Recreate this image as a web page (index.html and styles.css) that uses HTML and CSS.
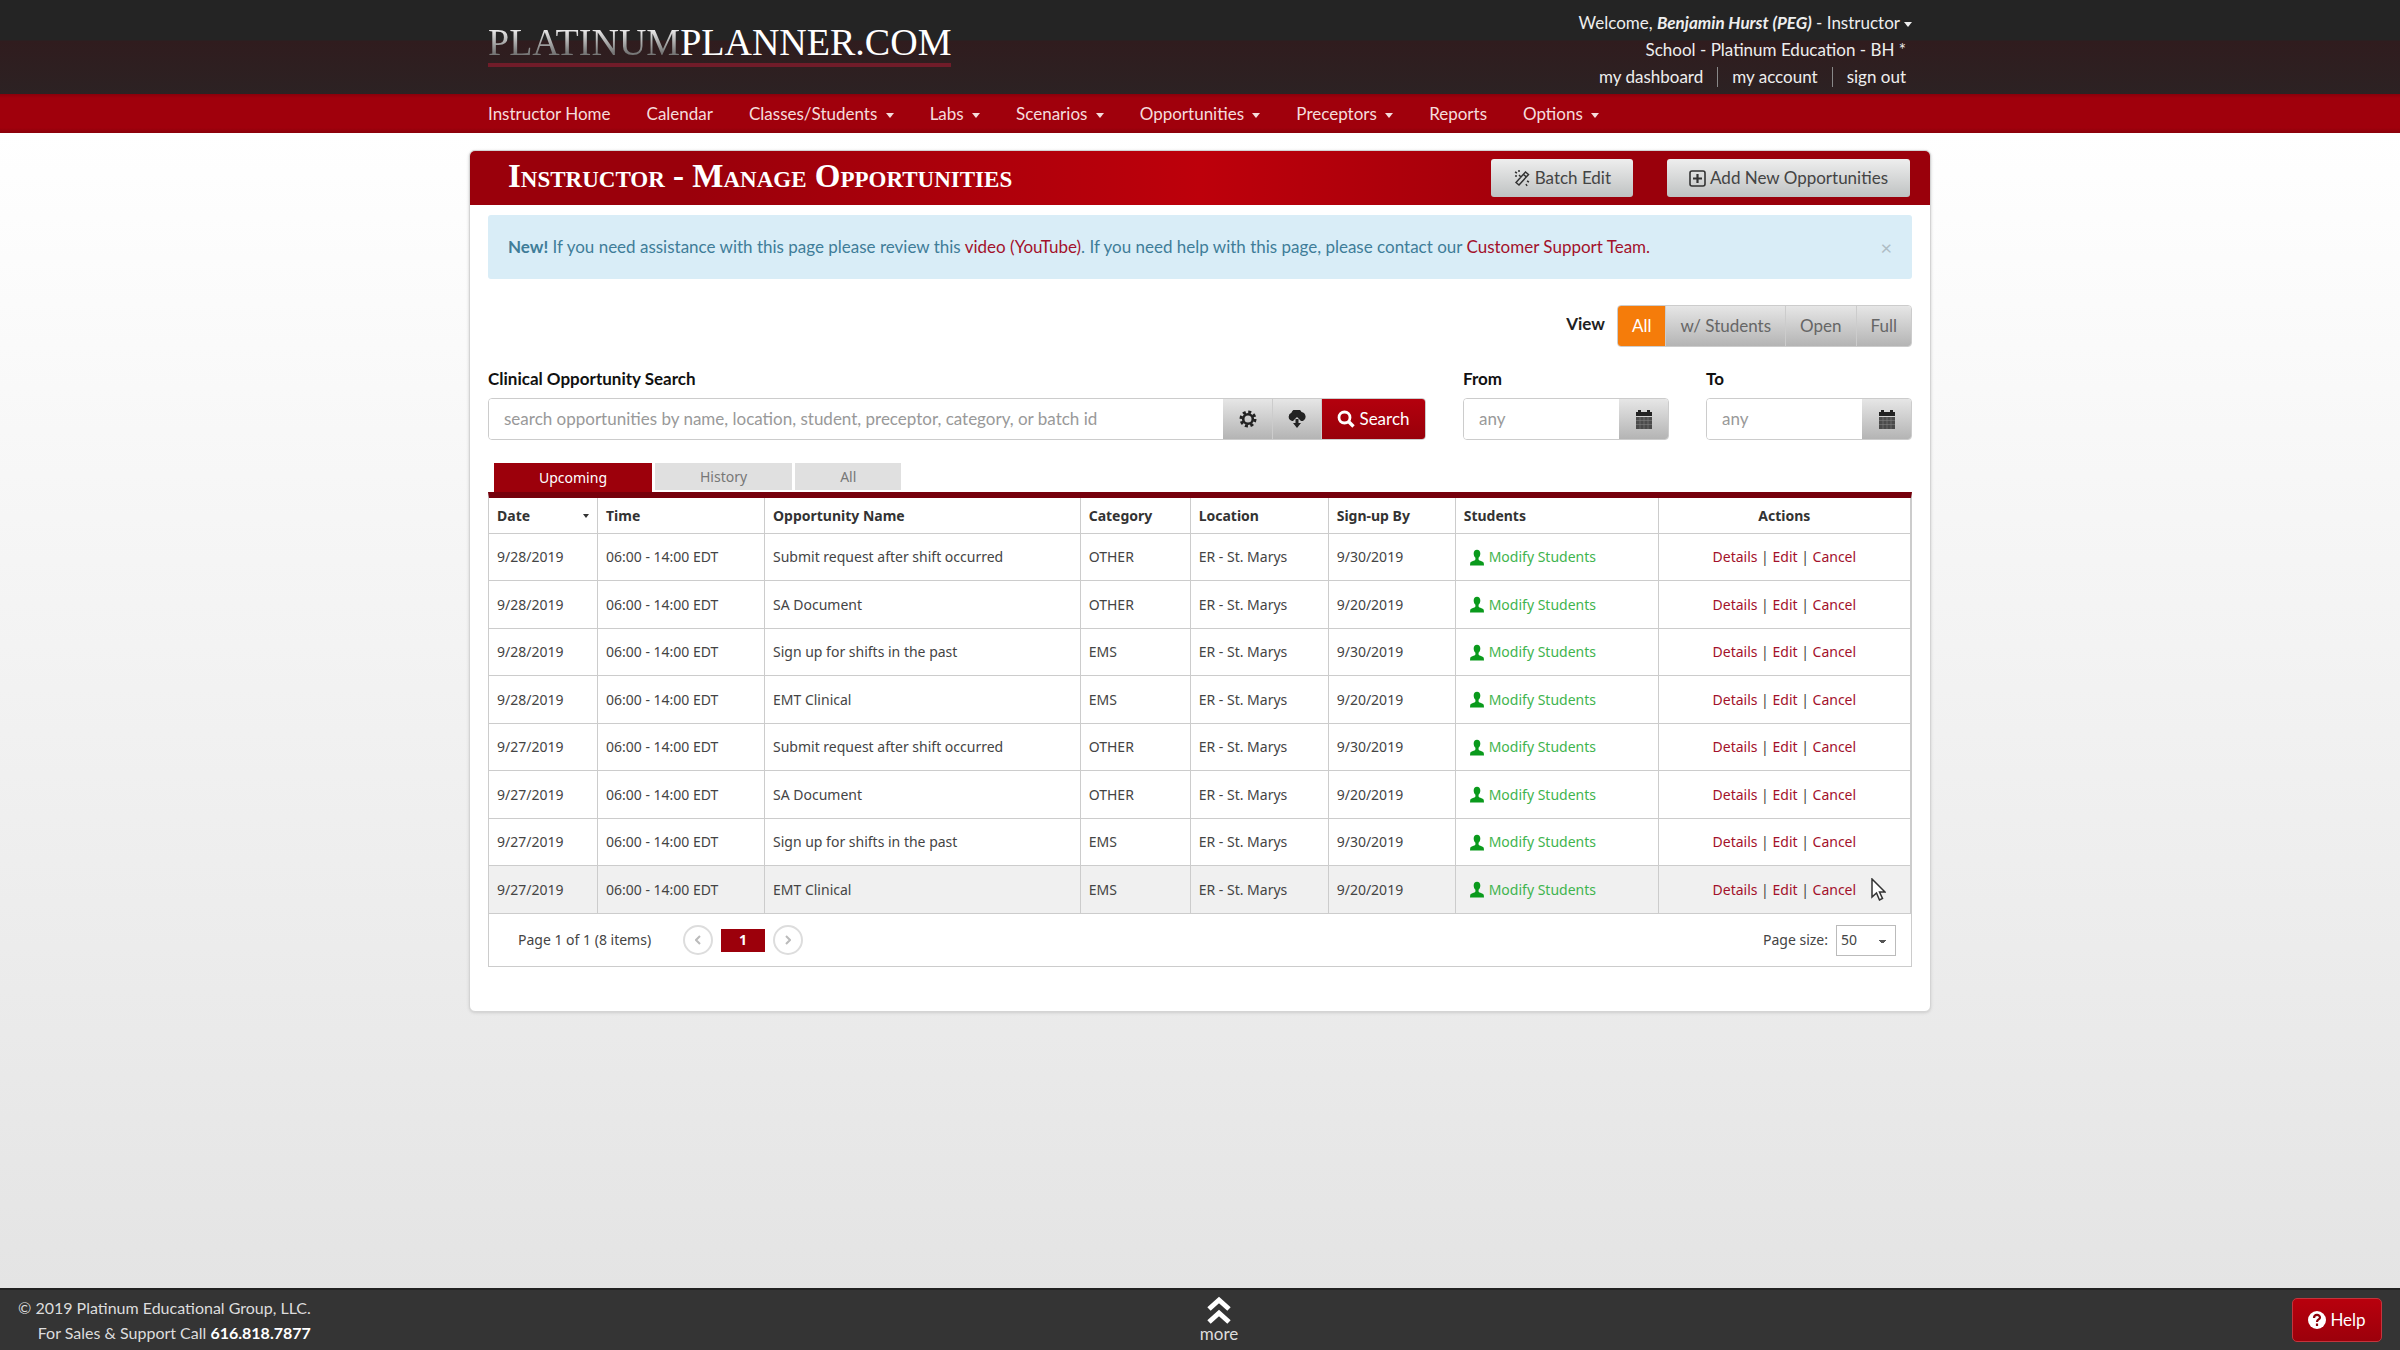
FILE: index.html
```html
<!DOCTYPE html>
<html lang="en">
<head>
    <meta charset="UTF-8">
    <meta name="viewport" content="width=device-width, initial-scale=1.0">
    <title>Instructor - Manage Opportunities</title>
    <link rel="stylesheet" href="styles.css">
</head>
<body>
    <svg width="0" height="0" class="sprite" aria-hidden="true">
        <symbol id="i-user" viewBox="0 0 16 18">
            <path d="M8 0C5.600 0 4.200 1.800 4.200 4.400c0 2.200.8 4 2 5v2C5.500 13 1 13.400.3 15L0 18h16l-.3-3c-.7-1.600-5.200-2-5.900-3.600v-2c1.200-1 2-2.800 2-5C11.800 1.800 10.400 0 8 0z"/>
        </symbol>
        <symbol id="i-calendar" viewBox="0 0 18 19">
            <path d="M1 2h2V0h3v2h6V0h3v2h2v4H1z"/>
            <path d="M1 7h16v12H1z" opacity=".75"/>
            <path d="M1 10.500h16M1 14.500h16M5 7v12M9 7v12M13 7v12" stroke="#888" stroke-width=".5"/>
        </symbol>
    </svg>

    <header class="top">
        <div class="container top-inner">
            <a href="#" class="logo"><span class="logo-light">PLATINUM</span>PLANNER.COM</a>
            <div class="account">
                <div>Welcome, <b><i>Benjamin Hurst (PEG)</i></b> - Instructor<span class="caret"></span></div>
                <div class="indent">School - Platinum Education - BH *</div>
                <div class="account-links indent">
                    <a href="#">my dashboard</a>
                    <a href="#">my account</a>
                    <a href="#">sign out</a>
                </div>
            </div>
        </div>
    </header>

    <nav class="menu">
        <div class="container menu-inner">
            <a href="#">Instructor Home</a>
            <a href="#">Calendar</a>
            <a href="#">Classes/Students <span class="caret"></span></a>
            <a href="#">Labs <span class="caret"></span></a>
            <a href="#">Scenarios <span class="caret"></span></a>
            <a href="#">Opportunities <span class="caret"></span></a>
            <a href="#">Preceptors <span class="caret"></span></a>
            <a href="#">Reports</a>
            <a href="#">Options <span class="caret"></span></a>
        </div>
    </nav>

    <main>
        <section class="panel">
            <div class="panel-head">
                <h1>Instructor - Manage Opportunities</h1>
                <button type="button" class="btn">
                    <svg width="18" height="18" viewBox="0 0 18 18" fill="none" stroke="#333" stroke-width="1.500"><path d="M3 13.500L12.500 3l3 2.500L6 16zM10.500 5.500l3 2.500M2 3l2 1M6 1v2M2 7h2M14 12l2 1M13 15l1 2M6 6l2 2"/></svg>
                    Batch Edit
                </button>
                <button type="button" class="btn">
                    <svg width="17" height="17" viewBox="0 0 17 17" fill="none" stroke="#333"><rect x="1" y="1" width="15" height="15" rx="2" stroke-width="1.600"/><path d="M8.500 4v9M4 8.500h9" stroke-width="2.200"/></svg>
                    Add New Opportunities
                </button>
            </div>

            <div class="panel-body">
                <div class="alert">
                    <p><b>New!</b> If you need assistance with this page please review this <a href="#">video (YouTube)</a>. If you need help with this page, please contact our <a href="#">Customer Support Team.</a></p>
                    <button type="button" class="close" aria-label="Close">×</button>
                </div>

                <div class="view">
                    <span class="view-label">View</span>
                    <div class="group">
                        <button type="button" class="active">All</button>
                        <button type="button">w/ Students</button>
                        <button type="button">Open</button>
                        <button type="button">Full</button>
                    </div>
                </div>

                <form class="filters">
                    <div class="field search">
                        <label for="search">Clinical Opportunity Search</label>
                        <div class="group">
                            <input type="text" id="search" placeholder="search opportunities by name, location, student, preceptor, category, or batch id">
                            <button type="button" class="icon-btn" aria-label="Settings">
                                <svg width="18" height="18" viewBox="0 0 18 18"><circle cx="9" cy="9" r="7" fill="none" stroke="#222" stroke-width="3" stroke-dasharray="3 2.500"/><circle cx="9" cy="9" r="4.800" fill="none" stroke="#222" stroke-width="2.600"/></svg>
                            </button>
                            <button type="button" class="icon-btn" aria-label="Download">
                                <svg width="20" height="18" viewBox="0 0 20 18"><path fill="#222" d="M5 11a4.300 4.300 0 0 1-.6-8.200A5.500 5.500 0 0 1 14.500 2a4.800 4.800 0 0 1 1.500 9h-2L10 7l-4 4z"/><path fill="#222" d="M8.500 9h3v4H14l-4 5-4-5h2.500z"/></svg>
                            </button>
                            <button type="submit" class="red">
                                <svg width="18" height="18" viewBox="0 0 18 18" fill="none" stroke="#fff"><circle cx="7.500" cy="7.500" r="5.500" stroke-width="2.800"/><path d="M11.500 11.500l5 5" stroke-width="3.400"/></svg>
                                Search
                            </button>
                        </div>
                    </div>
                    <div class="field date">
                        <label for="from">From</label>
                        <div class="group">
                            <input type="text" id="from" placeholder="any">
                            <button type="button" class="icon-btn" aria-label="Pick from date"><svg width="18" height="19" fill="#222"><use href="#i-calendar"/></svg></button>
                        </div>
                    </div>
                    <div class="field date">
                        <label for="to">To</label>
                        <div class="group">
                            <input type="text" id="to" placeholder="any">
                            <button type="button" class="icon-btn" aria-label="Pick to date"><svg width="18" height="19" fill="#222"><use href="#i-calendar"/></svg></button>
                        </div>
                    </div>
                </form>

                <div class="tabs">
                    <button type="button" class="tab active">Upcoming</button>
                    <button type="button" class="tab">History</button>
                    <button type="button" class="tab">All</button>
                </div>

                <div class="grid">
                    <table>
                        <thead>
                            <tr>
                                <th class="c-date"><div class="sort">Date <span class="caret"></span></div></th>
                                <th class="c-time">Time</th>
                                <th class="c-name">Opportunity Name</th>
                                <th class="c-cat">Category</th>
                                <th class="c-loc">Location</th>
                                <th class="c-sign">Sign-up By</th>
                                <th class="c-stud">Students</th>
                                <th class="actions">Actions</th>
                            </tr>
                        </thead>
                        <tbody>
                            <tr>
                                <td>9/28/2019</td><td>06:00 - 14:00 EDT</td><td>Submit request after shift occurred</td><td>OTHER</td><td>ER - St. Marys</td><td>9/30/2019</td>
                                <td><a href="#" class="modify"><svg width="14" height="17"><use href="#i-user"/></svg>Modify Students</a></td>
                                <td class="actions"><a href="#">Details</a> | <a href="#">Edit</a> | <a href="#">Cancel</a></td>
                            </tr>
                            <tr>
                                <td>9/28/2019</td><td>06:00 - 14:00 EDT</td><td>SA Document</td><td>OTHER</td><td>ER - St. Marys</td><td>9/20/2019</td>
                                <td><a href="#" class="modify"><svg width="14" height="17"><use href="#i-user"/></svg>Modify Students</a></td>
                                <td class="actions"><a href="#">Details</a> | <a href="#">Edit</a> | <a href="#">Cancel</a></td>
                            </tr>
                            <tr>
                                <td>9/28/2019</td><td>06:00 - 14:00 EDT</td><td>Sign up for shifts in the past</td><td>EMS</td><td>ER - St. Marys</td><td>9/30/2019</td>
                                <td><a href="#" class="modify"><svg width="14" height="17"><use href="#i-user"/></svg>Modify Students</a></td>
                                <td class="actions"><a href="#">Details</a> | <a href="#">Edit</a> | <a href="#">Cancel</a></td>
                            </tr>
                            <tr>
                                <td>9/28/2019</td><td>06:00 - 14:00 EDT</td><td>EMT Clinical</td><td>EMS</td><td>ER - St. Marys</td><td>9/20/2019</td>
                                <td><a href="#" class="modify"><svg width="14" height="17"><use href="#i-user"/></svg>Modify Students</a></td>
                                <td class="actions"><a href="#">Details</a> | <a href="#">Edit</a> | <a href="#">Cancel</a></td>
                            </tr>
                            <tr>
                                <td>9/27/2019</td><td>06:00 - 14:00 EDT</td><td>Submit request after shift occurred</td><td>OTHER</td><td>ER - St. Marys</td><td>9/30/2019</td>
                                <td><a href="#" class="modify"><svg width="14" height="17"><use href="#i-user"/></svg>Modify Students</a></td>
                                <td class="actions"><a href="#">Details</a> | <a href="#">Edit</a> | <a href="#">Cancel</a></td>
                            </tr>
                            <tr>
                                <td>9/27/2019</td><td>06:00 - 14:00 EDT</td><td>SA Document</td><td>OTHER</td><td>ER - St. Marys</td><td>9/20/2019</td>
                                <td><a href="#" class="modify"><svg width="14" height="17"><use href="#i-user"/></svg>Modify Students</a></td>
                                <td class="actions"><a href="#">Details</a> | <a href="#">Edit</a> | <a href="#">Cancel</a></td>
                            </tr>
                            <tr>
                                <td>9/27/2019</td><td>06:00 - 14:00 EDT</td><td>Sign up for shifts in the past</td><td>EMS</td><td>ER - St. Marys</td><td>9/30/2019</td>
                                <td><a href="#" class="modify"><svg width="14" height="17"><use href="#i-user"/></svg>Modify Students</a></td>
                                <td class="actions"><a href="#">Details</a> | <a href="#">Edit</a> | <a href="#">Cancel</a></td>
                            </tr>
                            <tr class="hovered">
                                <td>9/27/2019</td><td>06:00 - 14:00 EDT</td><td>EMT Clinical</td><td>EMS</td><td>ER - St. Marys</td><td>9/20/2019</td>
                                <td><a href="#" class="modify"><svg width="14" height="17"><use href="#i-user"/></svg>Modify Students</a></td>
                                <td class="actions"><a href="#">Details</a> | <a href="#">Edit</a> | <a href="#">Cancel</a>
                                    <svg class="cursor" width="15" height="23" viewBox="0 0 15 23" fill="#fff" stroke="#333" stroke-width="1.500"><path d="M1 1v18l4.500-4 3 7 3-1.500-3-6.500H14z"/></svg>
                                </td>
                            </tr>
                        </tbody>
                    </table>
                    <div class="pager">
                        <span>Page 1 of 1 (8 items)</span>
                        <button type="button" class="page-arrow" aria-label="Previous page"><svg width="6" height="10" viewBox="0 0 6 10"><path d="M5 1L1 5l4 4"/></svg></button>
                        <button type="button" class="page-current">1</button>
                        <button type="button" class="page-arrow" aria-label="Next page"><svg width="6" height="10" viewBox="0 0 6 10"><path d="M1 1l4 4-4 4"/></svg></button>
                        <label for="page-size">Page size:</label>
                        <select id="page-size">
                            <option>50</option>
                        </select>
                    </div>
                </div>
            </div>
        </section>
    </main>

    <footer>
        <div class="copyright">
            <div>© 2019 Platinum Educational Group, LLC.</div>
            <div>For Sales &amp; Support Call <b>616.818.7877</b></div>
        </div>
        <a href="#" class="more">
            <svg width="24" height="28" viewBox="0 0 24 28" fill="none" stroke="#fff" stroke-width="5"><path d="M2 13l10-9 10 9M2 26l10-9 10 9"/></svg>
            more
        </a>
        <button type="button" class="help">
            <svg width="18" height="18" viewBox="0 0 18 18"><circle cx="9" cy="9" r="9" fill="#fff"/><path d="M6 7c0-4 6-4 6-.5C12 8.500 9 8.500 9 11M9 12.500V15" fill="none" stroke="#8a0008" stroke-width="2.200"/></svg>
            Help
        </button>
    </footer>
</body>
</html>
```
FILE: styles.css
```css
* {
    box-sizing: border-box;
}
body {
    margin: 0;
    min-height: 100vh;
    display: flex;
    flex-direction: column;
    font-family: Lato, "Open Sans", sans-serif;
    font-size: 17px;
    line-height: 20px;
    color: #444;
    background: linear-gradient(#fff 130px, #e4e4e4 1290px);
}
a {
    color: #a3112b;
    text-decoration: none;
}
button, input, select {
    font: inherit;
    margin: 0;
}
button {
    display: inline-flex;
    align-items: center;
    justify-content: center;
    gap: 4px;
    border: 0;
    padding: 0;
    cursor: pointer;
}
.sprite {
    position: absolute;
}
.caret {
    display: inline-block;
    border: 4px solid transparent;
    border-top: 5px solid currentColor;
    border-bottom: 0;
    margin-left: 4px;
    vertical-align: 2px;
}
.container {
    width: 100%;
    max-width: 1424px;
    margin: 0 auto;
}

/* Header */
.top {
    background: linear-gradient(#242424 40px, #301c1e 41px, #2c2223);
    color: #eee;
}
.top a {
    color: #eee;
}
.top-inner {
    display: flex;
    justify-content: space-between;
    align-items: flex-start;
    min-height: 94px;
    padding-top: 9px;
}
.top .logo {
    margin-top: 12px;
    font-family: "Liberation Serif", serif;
    font-size: 38px;
    line-height: 42px;
    color: #fff;
    border-bottom: 4px solid #701c29;
}
.logo-light {
    color: transparent;
    background: linear-gradient(#eee 20%, #777 75%);
    background-clip: text;
    -webkit-background-clip: text;
}
.account {
    text-align: right;
    line-height: 27px;
}
.indent {
    padding-right: 6px;
}
.account-links {
    display: flex;
    justify-content: flex-end;
    align-items: center;
    height: 27px;
}
.account-links a {
    line-height: 20px;
}
.account-links a + a {
    margin-left: 14px;
    padding-left: 14px;
    border-left: 1px solid #888;
}

/* Main menu */
.menu {
    background: linear-gradient(#8a000a, #a0000c 4px, #a0000c 34px, #8a000a);
}
.menu-inner {
    display: flex;
    gap: 36px;
    padding: 10px 0 9px;
}
.menu a {
    color: #f5dcdc;
}

/* Panel */
main {
    flex: 1;
    padding: 17px 0;
}
.panel {
    width: 100%;
    max-width: 1462px;
    margin: 0 auto;
    background: #fff;
    border: 1px solid #d4d4d4;
    border-radius: 6px;
    box-shadow: 0 1px 3px #ccc;
}
.panel-head {
    display: flex;
    align-items: center;
    gap: 34px;
    min-height: 54px;
    padding: 0 20px 0 38px;
    border-radius: 5px 5px 0 0;
    background: linear-gradient(90deg, #9a000b, #9a000b 15%, #bd000b 50%, #9a000b 80%);
}
h1 {
    flex: 1;
    margin: 0;
    padding-bottom: 4px;
    font-family: "Liberation Serif", serif;
    font-size: 33px;
    line-height: 36px;
    font-variant: small-caps;
    color: #fff;
}
.btn {
    height: 38px;
    padding: 0 22px;
    border-radius: 3px;
    color: #444;
    background: linear-gradient(#eee, #bfc2c2);
}
.panel-body {
    padding: 10px 18px 44px;
}
.alert {
    display: flex;
    justify-content: space-between;
    align-items: center;
    min-height: 64px;
    padding: 0 20px;
    border-radius: 3px;
    background: #d9edf7;
    color: #3f7d99;
}
.alert p {
    margin: 0;
}
.close {
    background: none;
    font-size: 20px;
    color: #aebcc4;
}
.view {
    display: flex;
    justify-content: flex-end;
    gap: 12px;
    margin: 26px 0 22px;
}
.view-label {
    padding-top: 9px;
    font-weight: bold;
    color: #222;
}
.group {
    display: flex;
    height: 42px;
    border: 1px solid #ccc;
    border-radius: 4px;
    overflow: hidden;
}
.group button {
    padding: 0 14px;
    color: #666;
    background: linear-gradient(#e6e6e6, #b4b4b4);
}
.group button + button {
    border-left: 1px solid #ccc;
}
.group .active {
    color: #fff;
    background: #f57c0a;
}
.group .icon-btn {
    flex: none;
    width: 49px;
    padding: 0;
}
.group .red {
    flex: none;
    width: 104px;
    padding: 0;
    color: #fff;
    background: linear-gradient(#b4000d, #98000a);
}
.group input {
    flex: 1;
    min-width: 0;
    border: 0;
    padding: 0 15px;
    background: #fff;
}
.group input::placeholder {
    color: #999;
}
.filters {
    display: flex;
    gap: 37px;
}
.field label {
    display: block;
    margin-bottom: 9px;
    font-weight: bold;
    color: #111;
}
.search {
    flex: 1;
}
.date {
    width: 206px;
}

/* Tabs and table */
.tabs {
    display: flex;
    align-items: flex-start;
    gap: 3px;
    margin-top: 23px;
    padding-left: 6px;
}
.tabs, .grid {
    font-family: "Noto Sans", "Open Sans", sans-serif;
    font-size: 14px;
}
.tab {
    height: 27px;
    padding: 0 45px;
    background: #e0e0e0;
    color: #777;
}
.tab.active {
    height: 29px;
    background: #9c000b;
    color: #fff;
}
.grid {
    border: 1px solid #ccc;
    border-top: 6px solid #76000c;
}
table {
    width: 100%;
    table-layout: fixed;
    border-collapse: separate;
    border-spacing: 0;
}
th, td {
    height: 47px;
    padding: 0 8px;
    text-align: left;
    border-right: 1px solid #ccc;
    border-bottom: 1px solid #ccc;
}
th {
    height: 36px;
    color: #333;
}
tr:nth-child(even) td {
    height: 48px;
}
.c-date {
    width: 109px;
}
.c-time {
    width: 167px;
}
.c-name {
    width: 22.200%;
}
.c-cat {
    width: 110px;
}
.c-loc {
    width: 138px;
}
.c-sign {
    width: 127px;
}
.c-stud {
    width: 203px;
}
.sort {
    display: flex;
    justify-content: space-between;
    align-items: center;
}
.sort .caret {
    border-width: 4px 3px 0;
}
.hovered td {
    background: #f0f0f0;
}
.modify {
    display: flex;
    align-items: center;
    gap: 5px;
    padding-left: 6px;
    color: #3fb44e;
}
.modify svg {
    fill: #0a9a1c;
}
.actions {
    position: relative;
    text-align: center;
}
.cursor {
    position: absolute;
    right: 24px;
    top: 12px;
}
.pager {
    display: flex;
    align-items: center;
    gap: 8px;
    min-height: 52px;
    padding: 0 15px 0 29px;
}
.pager span {
    margin-right: 24px;
}
.pager label {
    margin-left: auto;
}
.page-arrow {
    width: 30px;
    height: 30px;
    border: 2px solid #ddd;
    border-radius: 50%;
    background: #fff;
}
.page-arrow path {
    fill: none;
    stroke: #bbb;
    stroke-width: 2;
}
.page-current {
    width: 44px;
    height: 23px;
    background: #9c000b;
    color: #fff;
    font-weight: bold;
}
select {
    appearance: none;
    width: 60px;
    height: 31px;
    padding: 0 4px;
    border: 1px solid #bbb;
    color: #444;
    background: linear-gradient(#555, #555) no-repeat right 9px center / 7px 1px,
        linear-gradient(#555, #555) no-repeat right 10px top 15px / 5px 1px,
        linear-gradient(#555, #555) no-repeat right 11px top 16px / 3px 1px,
        #fff;
}

/* Footer */
footer {
    display: grid;
    grid-template-columns: 1fr auto 1fr;
    align-items: center;
    min-height: 62px;
    padding: 0 18px;
    border-top: 2px solid #222;
    background: #343434;
    color: #ddd;
}
.copyright {
    justify-self: start;
    text-align: right;
    font-size: 16px;
    line-height: 25px;
}
.copyright b {
    color: #fff;
}
.more {
    display: flex;
    flex-direction: column;
    align-items: center;
    margin-left: 38px;
    color: #ddd;
}
.help {
    justify-self: end;
    width: 90px;
    height: 44px;
    border: 1px solid #c4343c;
    border-radius: 5px;
    background: linear-gradient(#b8000d, #9c000b);
    color: #fff;
}
```
